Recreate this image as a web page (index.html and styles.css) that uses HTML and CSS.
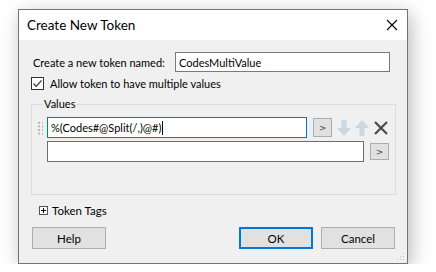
FILE: index.html
```html
<!DOCTYPE html>
<html lang="en">

<head>
    <meta charset="utf-8">
    <title>Create New Token</title>
    <link rel="stylesheet" href="styles.css">
</head>

<body>
    <div class="dialog">
        <div class="titlebar">
            <span class="title">Create New Token</span>
            <svg class="close" width="12" height="12" viewBox="0 0 12 12">
                <path d="M1 1L11 11M11 1L1 11" stroke="#000" stroke-width="1.1" fill="none" />
            </svg>
        </div>

        <div class="content">
            <div class="nameRow">
                <label class="nameLabel">Create a new token named:</label>
                <div class="textbox nameBox">CodesMultiValue</div>
            </div>

            <div class="checkRow">
                <span class="checkbox">
                    <svg width="11" height="11" viewBox="0 0 11 11">
                        <path d="M1.5 5.5L4.2 8.3L9.6 2.4" stroke="#333" stroke-width="1.2" fill="none" />
                    </svg>
                </span>
                <span>Allow token to have multiple values</span>
            </div>

            <fieldset class="values">
                <legend>Values</legend>

                <div class="valueRow">
                    <span class="grip"></span>
                    <div class="textbox active">%(Codes#@Split(/,)@#)<span class="caret"></span></div>
                    <button class="insBtn">&gt;</button>
                    <svg class="arrow" width="14" height="16" viewBox="0 0 14 16">
                        <path d="M4.5 0H9.5V8H14L7 16L0 8H4.5Z" fill="#cbd7e3" />
                    </svg>
                    <svg class="arrow up" width="14" height="16" viewBox="0 0 14 16">
                        <path d="M4.5 16H9.5V8H14L7 0L0 8H4.5Z" fill="#cbd7e3" />
                    </svg>
                    <svg class="remove" width="14" height="14" viewBox="0 0 14 14">
                        <path d="M1 1L13 13M13 1L1 13" stroke="#4a4a4a" stroke-width="2.2" fill="none" />
                    </svg>
                </div>

                <div class="valueRow second">
                    <div class="textbox wide"></div>
                    <button class="insBtn small">&gt;</button>
                </div>
            </fieldset>

            <div class="tags">
                <span class="plus"></span>
                <span>Token Tags</span>
            </div>

            <div class="buttons">
                <button class="btn">Help</button>
                <span class="spacer"></span>
                <button class="btn default">OK</button>
                <button class="btn">Cancel</button>
            </div>
            <span class="sizegrip"></span>
        </div>
    </div>
</body>

</html>
```

FILE: styles.css
```css
body {
    margin: 0;
    background-color: #ffffff;
    font-family: Lato, "Liberation Sans", sans-serif;
    font-size: 11px;
    color: #000;
}

.dialog {
    width: 388px;
    height: 253px;
    margin: 9px 0 0 18px;
    border: 1px solid #737373;
    background-color: #f0f0f0;
    box-shadow: 3px 5px 18px rgba(0, 0, 0, 0.28);
    display: flex;
    flex-direction: column;
}

.titlebar {
    height: 30px;
    background-color: #ffffff;
    display: flex;
    align-items: center;
    padding-left: 8px;
    padding-right: 9px;
    font-size: 13.5px;
}

.title {
    flex: 1;
}

.content {
    position: relative;
    flex: 1;
    display: flex;
    flex-direction: column;
}

.nameRow {
    display: flex;
    align-items: center;
    margin-top: 12px;
    padding-left: 14px;
}

.nameLabel {
    width: 142px;
    white-space: nowrap;
}

.textbox {
    box-sizing: border-box;
    height: 20px;
    border: 1px solid #7a7a7a;
    background-color: #fff;
    padding-left: 3px;
    line-height: 17px;
    display: flex;
    align-items: center;
    white-space: nowrap;
}

.nameBox {
    width: 215px;
}

.checkRow {
    display: flex;
    align-items: center;
    margin-top: 5px;
    padding-left: 12px;
    gap: 6px;
}

.checkbox {
    box-sizing: border-box;
    width: 13px;
    height: 13px;
    border: 1px solid #333;
    background-color: #fff;
    display: flex;
    align-items: center;
    justify-content: center;
}

.values {
    margin: 7px 0 0 12px;
    width: 365px;
    height: 98px;
    box-sizing: border-box;
    border: 1px solid #dcdcdc;
    padding: 6px 0 0 5px;
}

.values legend {
    padding: 0 1px;
    margin-left: 6px;
    line-height: 14px;
}

.valueRow {
    display: flex;
    align-items: center;
    height: 21px;
}

.valueRow.second {
    margin-top: 3px;
    padding-left: 10px;
}

.grip {
    width: 6px;
    height: 14px;
    margin-right: 4px;
    background-image: radial-gradient(circle, #b5b5b5 1.1px, transparent 1.2px);
    background-size: 4px 3.6px;
}

.textbox.active {
    width: 260px;
    height: 21px;
    border-color: #0078d7;
}

.caret {
    width: 1px;
    height: 14px;
    background-color: #000;
    margin-left: 1px;
}

.textbox.wide {
    width: 317px;
    height: 21px;
    border-color: #6e6e6e;
}

.insBtn {
    box-sizing: border-box;
    width: 19px;
    height: 19px;
    margin-left: 6px;
    padding: 0;
    border: 1px solid #adadad;
    background-color: #e1e1e1;
    font-family: "DejaVu Sans", sans-serif;
    font-size: 9px;
    color: #2c4a6e;
}

.insBtn.small {
    height: 17px;
}

.arrow {
    margin-left: 5px;
}

.arrow.up {
    margin-left: 4px;
}

.remove {
    margin-left: 5px;
}

.tags {
    display: flex;
    align-items: center;
    gap: 4px;
    margin-top: 9px;
    padding-left: 20px;
    font-size: 11.5px;
}

.plus {
    box-sizing: border-box;
    width: 9px;
    height: 9px;
    border: 1px solid #555;
    background-color: #fff;
    background-image: linear-gradient(#000, #000), linear-gradient(#000, #000);
    background-size: 5px 1px, 1px 5px;
    background-position: center;
    background-repeat: no-repeat;
}

.buttons {
    display: flex;
    margin-top: 10px;
    padding-left: 13px;
    padding-right: 12px;
    gap: 8px;
}

.spacer {
    flex: 1;
}

.btn {
    box-sizing: border-box;
    width: 74px;
    height: 22px;
    border: 1px solid #adadad;
    background-color: #e1e1e1;
    font-family: Lato, "Liberation Sans", sans-serif;
    font-size: 11.5px;
    color: #000;
    padding: 0;
}

.btn.default {
    border: 2px solid #0078d7;
}

.sizegrip {
    position: absolute;
    right: 3px;
    bottom: 3px;
    width: 8px;
    height: 8px;
    background-image: radial-gradient(circle, #bdbdbd 0.9px, transparent 1px);
    background-size: 3px 3px;
    clip-path: polygon(100% 0, 100% 100%, 0 100%);
}
```
